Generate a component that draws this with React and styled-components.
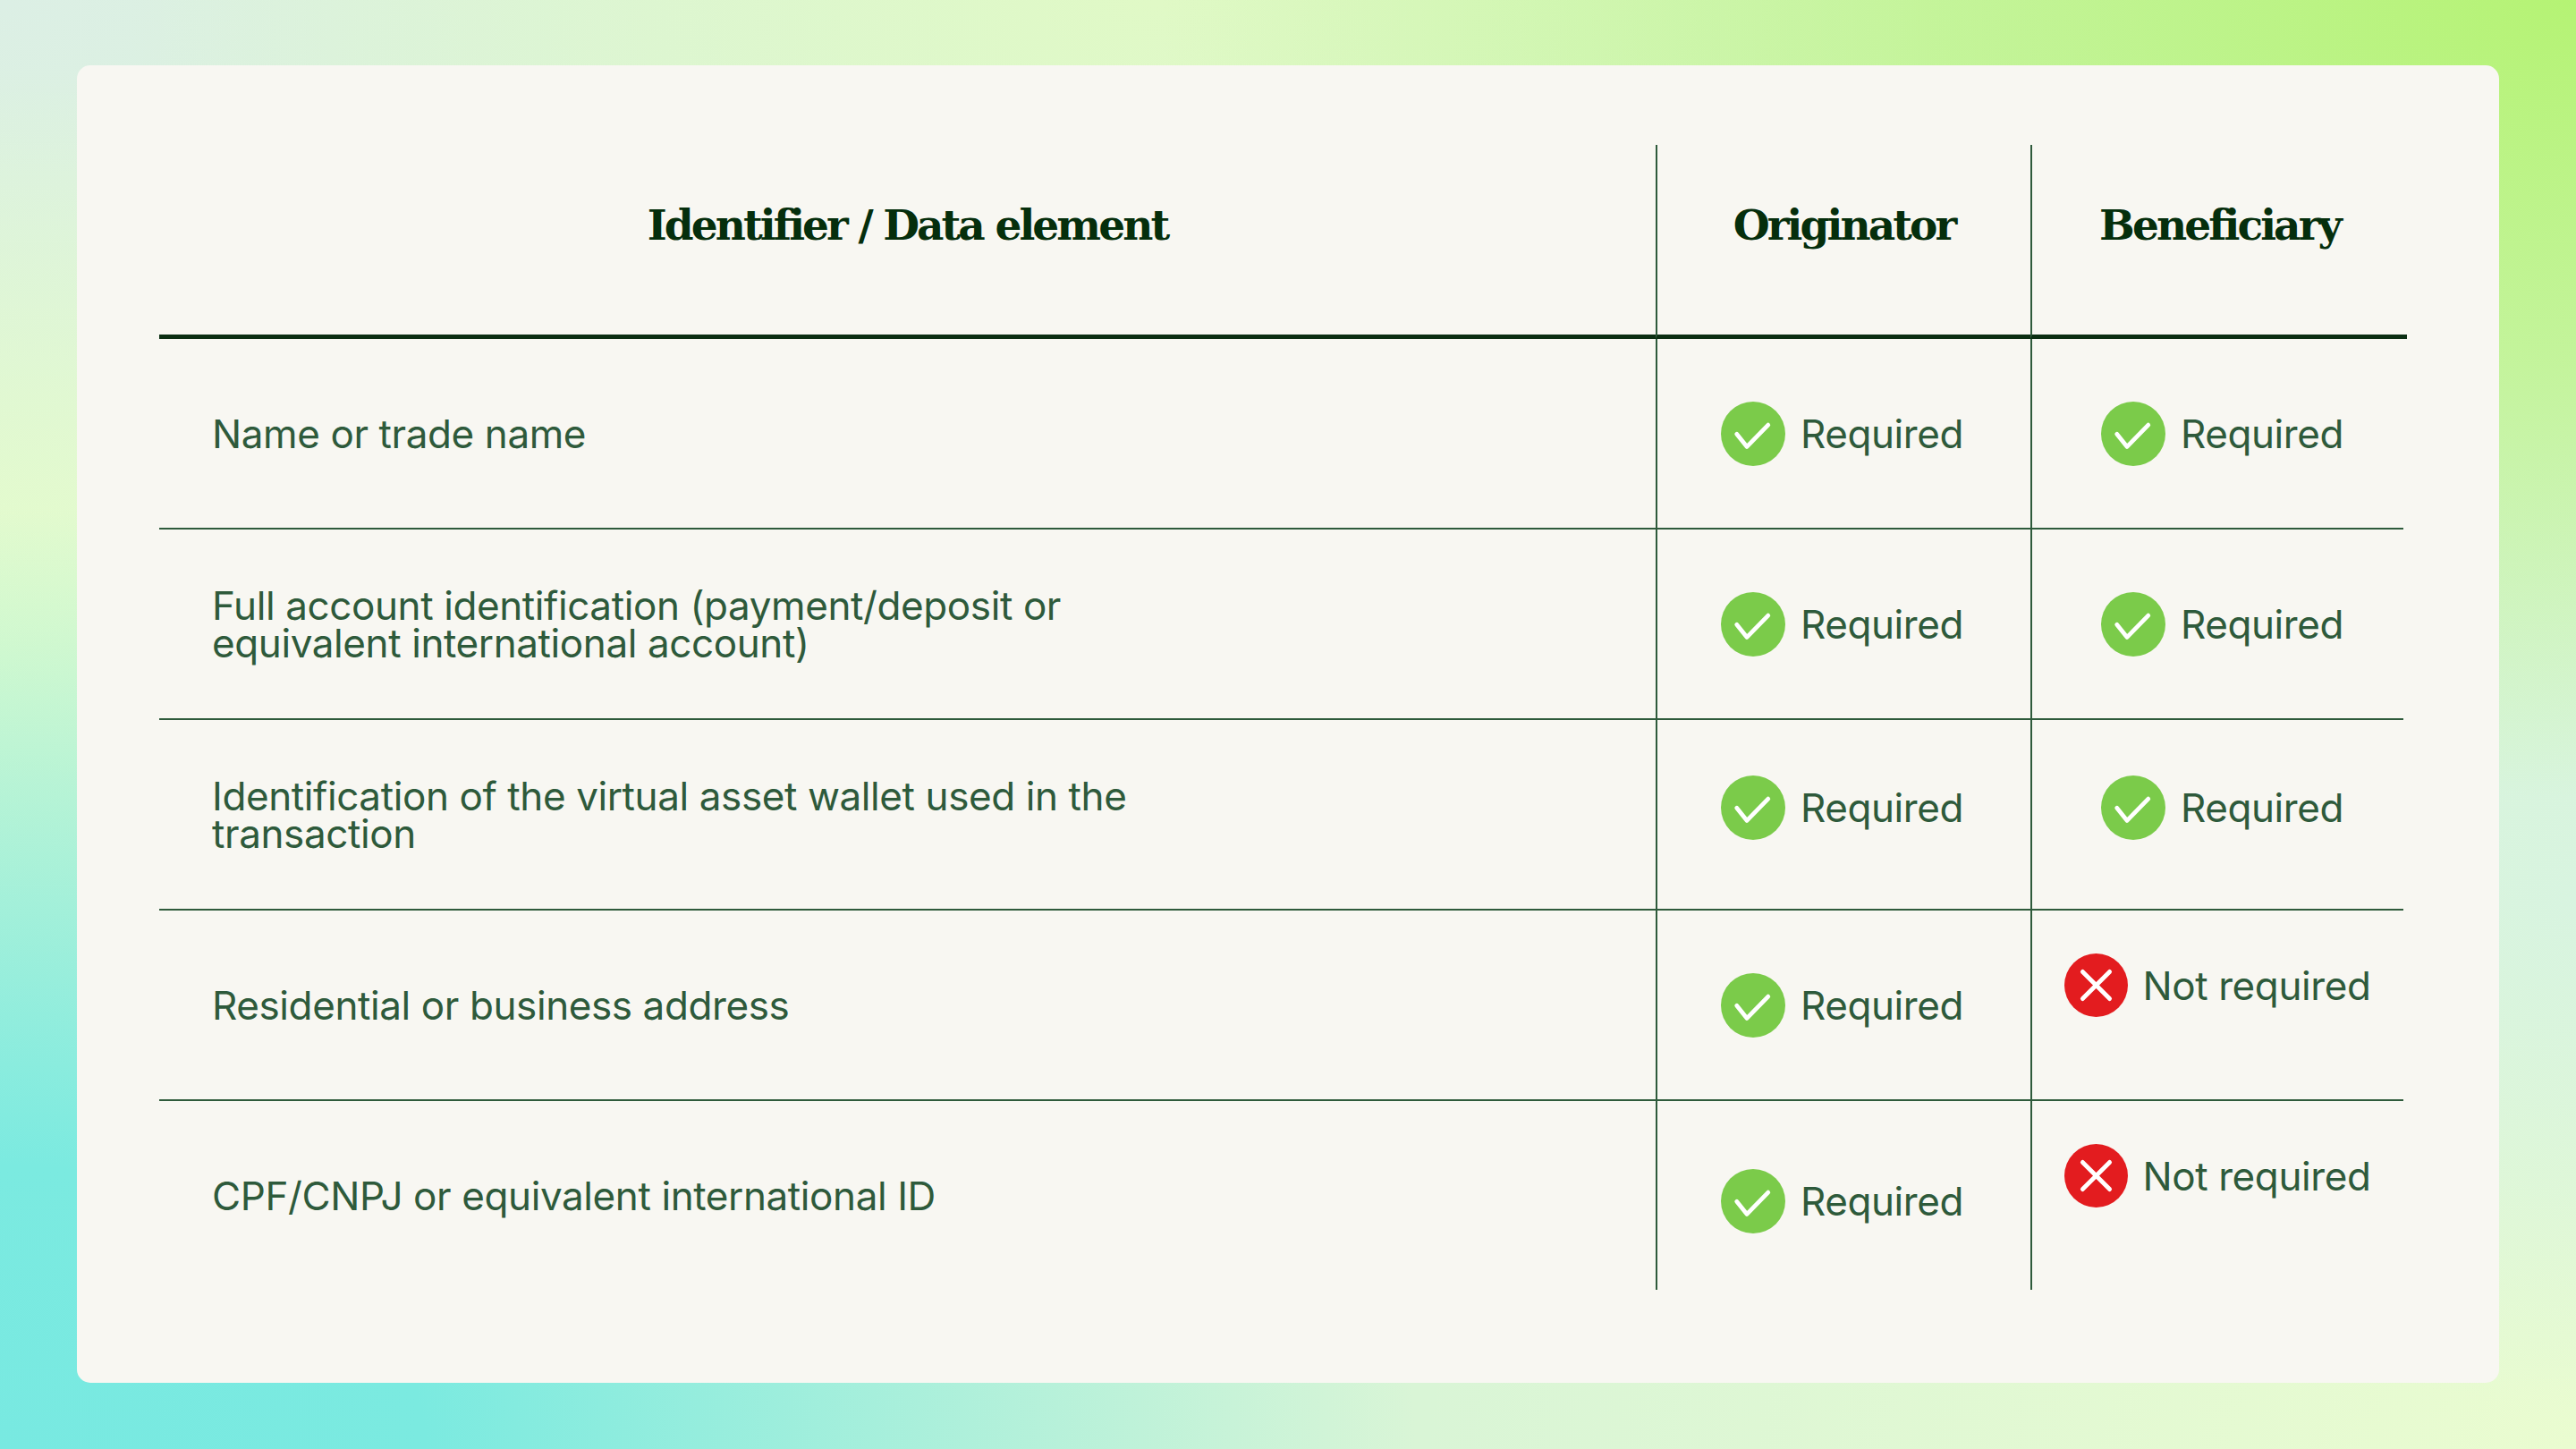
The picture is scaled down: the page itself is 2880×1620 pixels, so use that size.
import React from 'react'
import styled, { createGlobalStyle } from 'styled-components'

const GlobalStyle = createGlobalStyle`
    html, body {
        margin:0;
        padding:0;
    }
    body {
        font-family:'Inter', 'Noto Sans', sans-serif;
    }
`

const rows = [
    { label: 'Name or trade name', originator: true, beneficiary: true },
    { label: 'Full account identification (payment/deposit or equivalent international account)', originator: true, beneficiary: true },
    { label: 'Identification of the virtual asset wallet used in the transaction', originator: true, beneficiary: true, lift: 8 },
    { label: 'Residential or business address', originator: true, beneficiary: false },
    { label: 'CPF/CNPJ or equivalent international ID', originator: true, beneficiary: false, drop: 6 },
]

const CheckIcon = () => (
    <svg width="72" height="72" viewBox="0 0 24 24">
        <circle cx="12" cy="12" r="12" fill="#7bcb4a"/>
        <path d="M5.9 12.1 L9.7 16.8 L17.6 8.7" fill="none" stroke="#fff" strokeWidth="1.6" strokeLinecap="round" strokeLinejoin="round"/>
    </svg>
)

const CrossIcon = () => (
    <svg width="71" height="71" viewBox="0 0 24 24">
        <circle cx="12" cy="12" r="12" fill="#e31c1f"/>
        <path d="M6.9 6.9 L17.1 17.1 M17.1 6.9 L6.9 17.1" fill="none" stroke="#fff" strokeWidth="1.65" strokeLinecap="round"/>
    </svg>
)

const Status = ({ ok, lift, drop, nudge }) => (
    <StatusWrap ok={ok} lift={lift} drop={drop} nudge={ok ? nudge : 0}>
        {ok ? <CheckIcon/> : <CrossIcon/>}
        <span>{ok ? 'Required' : 'Not required'}</span>
    </StatusWrap>
)

export default function App() {
    return(
        <Page>
            <GlobalStyle/>
            <Card>
                <Table>
                    <HeadCell>Identifier / Data element</HeadCell>
                    <HeadCell divider>Originator</HeadCell>
                    <HeadCell divider>Beneficiary</HeadCell>
                    {rows.map((row, i) => {
                        const last = i === rows.length - 1
                        return (
                            <React.Fragment key={row.label}>
                                <LabelCell last={last}><Label>{row.label}</Label></LabelCell>
                                <StatusCell last={last}><Status ok={row.originator} lift={row.lift} drop={row.drop} nudge={-4}/></StatusCell>
                                <StatusCell last={last} end><Status ok={row.beneficiary} lift={row.lift} drop={row.drop} nudge={10}/></StatusCell>
                            </React.Fragment>
                        )
                    })}
                </Table>
            </Card>
        </Page>
    )
}


const Page = styled.div`
    width:2880px;
    height:1620px;
    box-sizing:border-box;
    padding:73px 86px 74px 86px;
    background-color:#d9f5d6;
    background-image:
        radial-gradient(ellipse 55% 55% at 100% 0%, #b5f374 0%, rgba(181,243,116,0.6) 45%, rgba(181,243,116,0) 100%),
        radial-gradient(ellipse 40% 45% at 45% 0%, #e0f9c6 0%, rgba(224,249,198,0) 100%),
        radial-gradient(ellipse 55% 65% at 0% 100%, #78e9e1 0%, #7beae0 30%, rgba(120,233,225,0) 100%),
        radial-gradient(ellipse 35% 40% at 0% 45%, #e6fccb 0%, rgba(230,252,203,0) 100%),
        radial-gradient(ellipse 25% 35% at 100% 62%, #d8f4e0 0%, rgba(216,244,224,0) 100%),
        radial-gradient(ellipse 45% 45% at 100% 100%, #eafcd0 0%, rgba(234,252,208,0) 100%),
        radial-gradient(ellipse 40% 40% at 0% 0%, #dcefe5 0%, rgba(220,239,229,0) 100%);
`

const Card = styled.div`
    height:100%;
    box-sizing:border-box;
    background:#f8f7f2;
    border-radius:15px;
    padding:89px 103px 110px 92px;
`

const Table = styled.div`
    display:grid;
    grid-template-columns:1673px 419px 1fr;
    grid-template-rows:217px repeat(4, 213px) 211px;
`

const HeadCell = styled.div`
    display:flex;
    align-items:center;
    justify-content:center;
    padding-bottom:34px;
    border-bottom:5px solid #0b2e12;
    border-left:${p => p.divider ? '2px solid #2e5a3b' : 'none'};
    font-family:'DejaVu Serif', serif;
    font-weight:700;
    font-size:47px;
    letter-spacing:-2.9px;
    color:#052e0c;
`

const LabelCell = styled.div`
    display:flex;
    align-items:center;
    padding-left:59px;
    border-bottom:${p => p.last ? 'none' : '2px solid #2e5a3b'};
`

const Label = styled.div`
    max-width:1100px;
    font-size:44px;
    line-height:42px;
    letter-spacing:-0.4px;
    color:#2e5a3b;
`

const StatusCell = styled.div`
    display:flex;
    align-items:center;
    justify-content:center;
    border-left:2px solid #2e5a3b;
    border-bottom:${p => p.last ? 'none' : '2px solid #2e5a3b'};
    margin-right:${p => p.end ? '4px' : '0'};
`

const StatusWrap = styled.div`
    display:flex;
    align-items:center;
    gap:${p => p.ok ? '17px' : '16px'};
    margin-bottom:${p => p.ok ? (p.lift || 0) * 2 : 44}px;
    margin-top:${p => p.ok ? (p.drop || 0) * 2 : 0}px;
    margin-left:${p => p.nudge || 0}px;
    font-size:44px;
    letter-spacing:-0.4px;
    color:#2e5a3b;

    svg{
        flex:none;
        display:block;
    }
`
